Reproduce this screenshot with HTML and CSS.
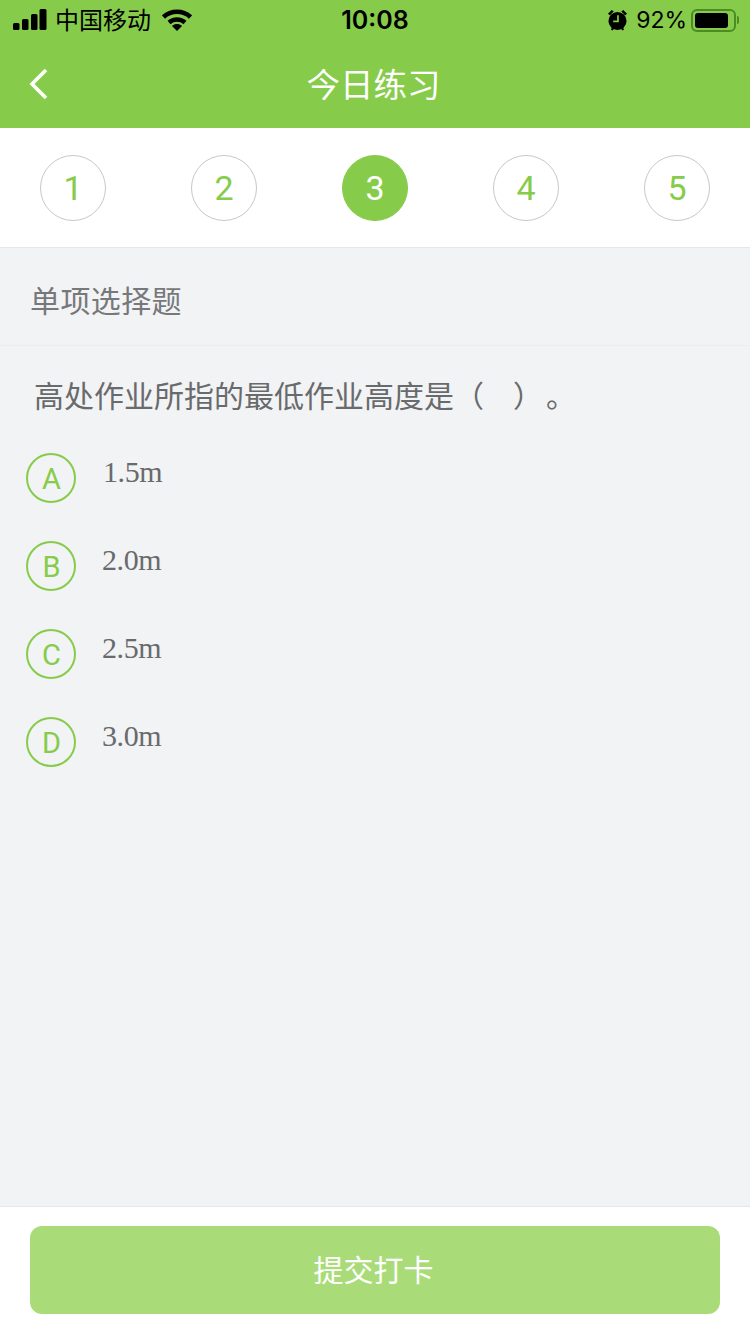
FILE: index.html
```html
<!DOCTYPE html>
<html lang="zh-CN">
<head>
<meta charset="utf-8">
<title>今日练习</title>
<link rel="stylesheet" href="styles.css">
</head>
<body>
<div class="page">
  <header class="header">
    <div class="status">
      <div class="status-left">
        <svg class="signal" width="34" height="22" viewBox="0 0 34 22"><rect x="0" y="14" width="6.500" height="7" rx="1.500"/><rect x="9" y="10" width="6.500" height="11" rx="1.500"/><rect x="18" y="5" width="6.500" height="16" rx="1.500"/><rect x="26.500" y="0" width="7" height="21" rx="1.500"/></svg>
        <span class="carrier">中国移动</span>
        <svg class="wifi" width="30" height="22" viewBox="0 0 30 22"><path d="M1.500 8C9 1 21 1 28.500 8" fill="none" stroke="#000" stroke-width="4.600"/><path d="M7 13.500c4.500-4 11.500-4 16 0" fill="none" stroke="#000" stroke-width="4.400"/><path d="M10 17c3-2.600 7-2.600 10 0l-5 5z"/></svg>
      </div>
      <span class="time">10:08</span>
      <div class="status-right">
        <svg class="alarm" width="21" height="24" viewBox="0 0 22 24"><circle cx="11" cy="13" r="9.500"/><path d="M1 5.500 5 1.500 7 3 3 7zM21 5.500 17 1.500 15 3 19 7zM4 22l2-3 2 1-2 3zM18 22l-2-3-2 1 2 3z"/><path d="M11.500 7v6.500H6.500" fill="none" stroke="#86cc4a" stroke-width="1.800"/></svg>
        <span class="battery-pct">92%</span>
        <span class="battery"><span class="battery-fill"></span></span>
        <span class="battery-cap"></span>
      </div>
    </div>
    <nav class="nav">
      <svg class="back" width="20" height="32" viewBox="0 0 20 32"><path d="M17 2 3 16l14 14" fill="none" stroke="#fff" stroke-width="3.600"/></svg>
      <h1 class="title">今日练习</h1>
    </nav>
  </header>

  <div class="steps">
    <span class="step">1</span>
    <span class="step">2</span>
    <span class="step step-active">3</span>
    <span class="step">4</span>
    <span class="step">5</span>
  </div>

  <main class="main">
    <div class="type">单项选择题</div>
    <p class="question">高处作业所指的最低作业高度是（<span class="gap-inner"></span>）<span class="gap-end"></span>。</p>
    <ul class="options">
      <li class="option"><span class="letter">A</span><span class="answer answer-a">1.5m</span></li>
      <li class="option"><span class="letter">B</span><span class="answer">2.0m</span></li>
      <li class="option"><span class="letter">C</span><span class="answer">2.5m</span></li>
      <li class="option"><span class="letter">D</span><span class="answer">3.0m</span></li>
    </ul>
  </main>

  <footer class="footer">
    <button class="submit" type="button">提交打卡</button>
  </footer>
</div>
</body>
</html>
```
FILE: styles.css
```css
* { box-sizing: border-box; }
html, body { margin: 0; padding: 0; }
body {
  font-family: "Noto Sans CJK SC", "Liberation Sans", sans-serif;
  background: #f2f3f5;
}
.page {
  width: 750px;
  height: 1334px;
  display: flex;
  flex-direction: column;
  overflow: hidden;
}
.header { background: #86cc4a; height: 128px; flex: none; }
.status {
  height: 40px;
  display: flex;
  align-items: center;
  justify-content: space-between;
  padding: 0 11px 0 13px;
  color: #000;
  position: relative;
}
.status-left, .status-right { display: flex; align-items: center; }
.carrier { font-size: 24px; line-height: 38px; margin-left: 8px; height: 40px; }
.wifi { margin-left: 11px; }
.time {
  position: absolute;
  left: 0;
  right: 0;
  text-align: center;
  font-family: "Inter", "Liberation Sans", sans-serif;
  font-size: 25px;
  font-weight: 600;
}
.status-right { font-family: "Inter", "Liberation Sans", sans-serif; font-size: 23px; }
.battery-pct { margin-left: 8px; font-weight: 400; }
.battery {
  display: flex;
  width: 45px;
  height: 23px;
  margin-left: 4px;
  padding: 2px 6px 2px 2px;
  border: 2px solid #4e8a26;
  border-radius: 6px;
}
.battery-fill { flex: 1; background: #000; border-radius: 3px; }
.battery-cap { width: 2px; height: 8px; margin-left: 1px; background: #4e8a26; border-radius: 0 2px 2px 0; }
.nav {
  height: 88px;
  display: flex;
  align-items: center;
  justify-content: center;
  position: relative;
  padding-right: 3px;
}
.back { position: absolute; left: 29px; top: 28px; }
.title {
  margin: 0;
  font-size: 33.500px;
  font-weight: 400;
  color: #fff;
  line-height: 86px;
  height: 88px;
}
.steps {
  flex: none;
  height: 120px;
  background: #fff;
  border-bottom: 1px solid #e6e7e9;
  padding: 27px 40px 0;
  display: flex;
  justify-content: space-between;
  align-items: flex-start;
}
.step {
  width: 66px;
  height: 66px;
  border-radius: 50%;
  border: 1px solid #c8c8c8;
  color: #86cc4a;
  font-family: "Roboto", "Liberation Sans", sans-serif;
  font-weight: 400;
  font-size: 34px;
  display: flex;
  align-items: center;
  justify-content: center;
}
.step-active { background: #86cc4a; border-color: #86cc4a; color: #fff; }
.main { flex: 1; min-height: 0; }
.type {
  height: 98px;
  padding-left: 30px;
  border-bottom: 1px solid #ecedef;
  font-size: 30px;
  letter-spacing: 0.400px;
  line-height: 103px;
  color: #77787a;
}
.question {
  margin: 0;
  padding: 24px 0 0 34px;
  height: 74px;
  font-size: 30px;
  line-height: 48px;
  color: #696a6c;
}
.gap-inner { display: inline-block; width: 29px; }
.gap-end { display: inline-block; width: 3px; }
.options { list-style: none; margin: 34px 0 0; padding: 0 0 0 26px; }
.option {
  height: 50px;
  margin-bottom: 38px;
  display: flex;
  align-items: flex-start;
  gap: 26px;
  position: relative;
  top: -1px;
}
.letter {
  flex: none;
  width: 50px;
  height: 50px;
  padding: 1px 0 0 1px;
  border-radius: 50%;
  border: 2px solid #86cc4a;
  color: #86cc4a;
  font-family: "Roboto", "Liberation Sans", sans-serif;
  font-weight: 400;
  font-size: 29px;
  display: flex;
  align-items: center;
  justify-content: center;
}
.answer {
  font-family: "Liberation Serif", serif;
  font-size: 30px;
  line-height: 38px;
  color: #696a6c;
  letter-spacing: -0.400px;
}
.answer-a { margin-left: 1px; }
.footer {
  flex: none;
  height: 128px;
  background: #fff;
  border-top: 1px solid #e6e7e9;
  padding: 19px 30px 0;
}
.submit {
  display: block;
  width: 100%;
  height: 88px;
  border: 0;
  border-radius: 12px;
  background: #a9dc78;
  color: #fff;
  font-family: inherit;
  font-size: 30px;
  padding: 0 3px 4px 0;
}
```
